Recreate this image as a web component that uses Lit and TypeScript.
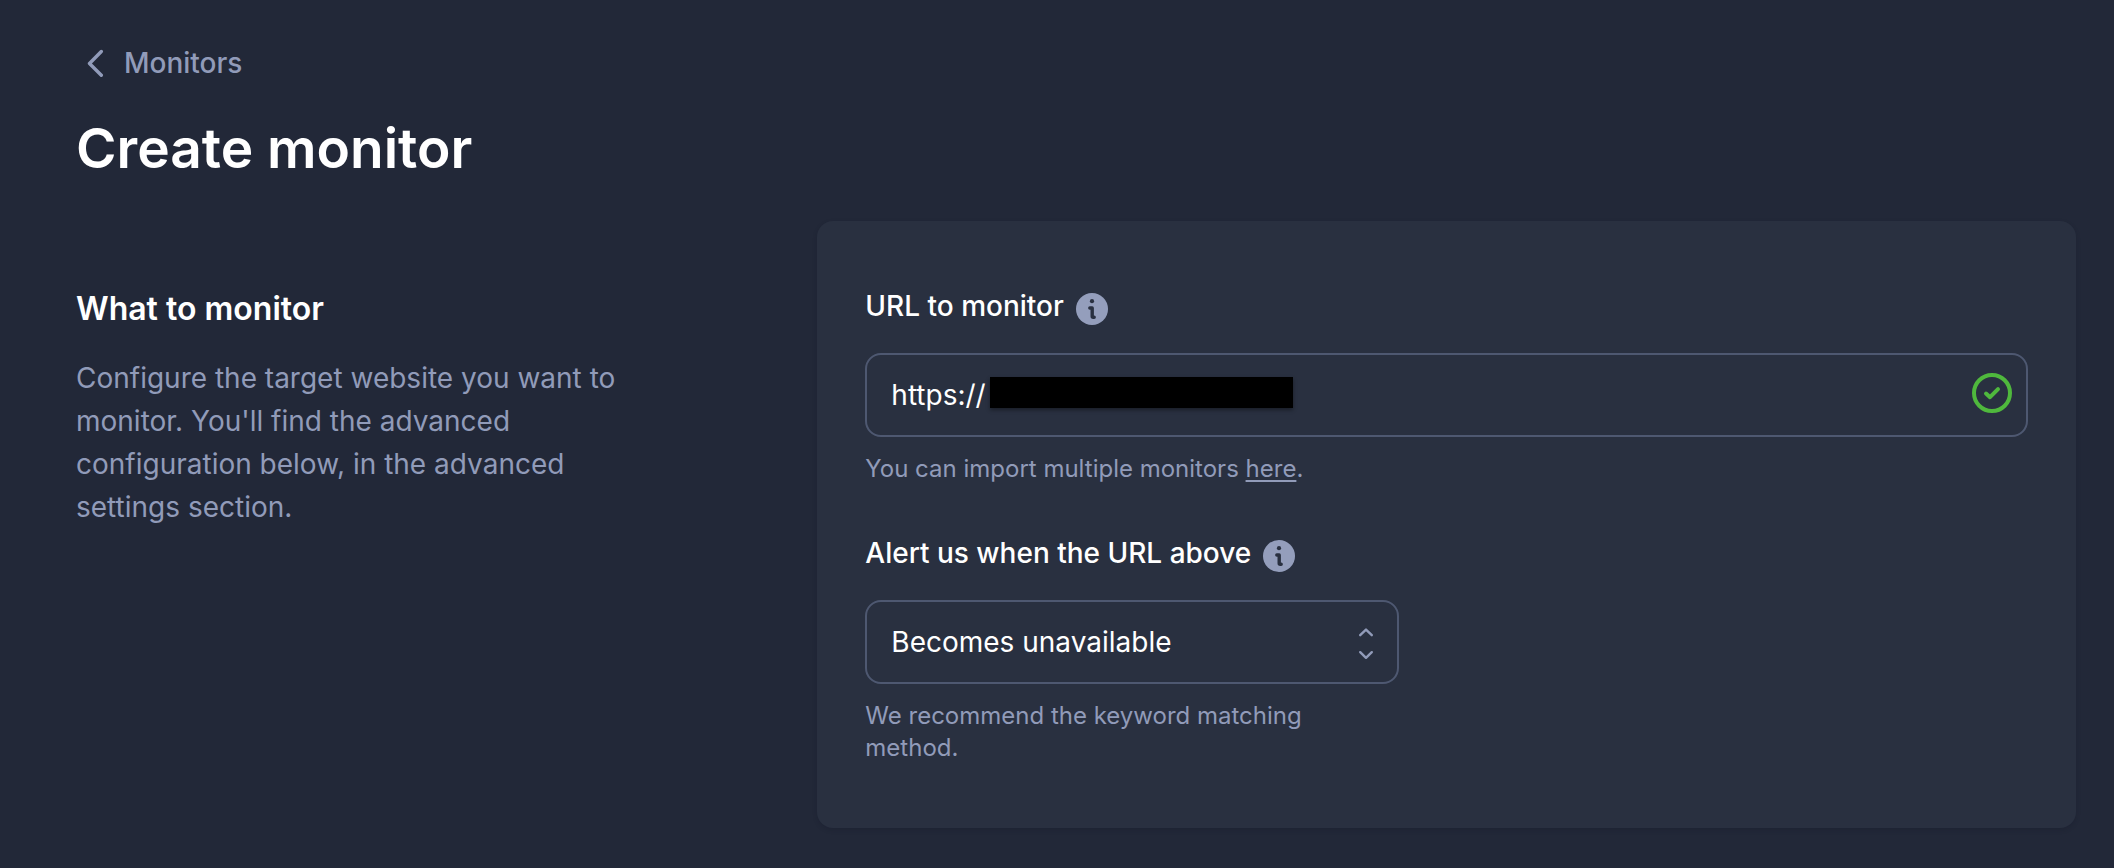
import { LitElement, html, css } from "lit";
import { customElement } from "lit/decorators.js";

const infoIcon = html`
  <svg class="info" viewBox="0 0 32 32" aria-hidden="true">
    <circle cx="16" cy="16" r="16" fill="#949ebc" />
    <circle cx="16" cy="8.2" r="2.1" fill="#293040" />
    <path d="M13.8 15h2.4v8.2q0 1 1 1h1" fill="none" stroke="#293040" stroke-width="3.4" stroke-linecap="round" stroke-linejoin="round" />
  </svg>
`;

@customElement("app-root")
export class AppRoot extends LitElement {
  static styles = css`
    :host {
      display: block;
      box-sizing: border-box;
      min-height: 100vh;
      padding: 43px 38px 40px 76px;
      background: #222838;
      color: #fff;
      font-family: Inter, "Liberation Sans", sans-serif;
      font-size: 28px;
    }
    * {
      box-sizing: border-box;
    }
    h1,
    h2,
    p {
      margin: 0;
    }
    .back {
      display: inline-flex;
      align-items: center;
      gap: 20px;
      padding-left: 10px;
      color: #919bb9;
      font-weight: 500;
      line-height: 40px;
      text-decoration: none;
      vertical-align: top;
    }
    .chevron {
      width: 18px;
      height: 28px;
    }
    .title {
      margin: 33px 0 41px;
      font-size: 55px;
      font-weight: 600;
      line-height: 64px;
    }
    .section {
      display: grid;
      grid-template-columns: 1fr 2fr;
      gap: 112px;
    }
    .intro {
      max-width: 576px;
      padding-top: 68px;
    }
    .heading {
      margin-bottom: 28px;
      font-size: 32px;
      font-weight: 600;
      line-height: 40px;
    }
    .lead {
      color: #919bb9;
      line-height: 43px;
    }
    .card {
      display: grid;
      gap: 47px;
      padding: 64px 48px;
      border-radius: 16px;
      background: #293040;
      box-shadow: 0 2px 4px rgba(20, 24, 38, 0.25);
    }
    .half {
      width: calc(50% - 48px);
    }
    .label-row {
      display: flex;
      align-items: flex-end;
      gap: 12px;
      margin-bottom: 28px;
      font-weight: 500;
      line-height: 38px;
      padding-top: 2px;
    }
    .info {
      width: 32px;
      height: 32px;
      flex: none;
    }
    .control {
      position: relative;
    }
    .box {
      display: block;
      width: 100%;
      height: 84px;
      padding: 0 72px 0 24px;
      border: 2px solid #4e5871;
      border-radius: 16px;
      outline: none;
      appearance: none;
      background: transparent;
      color: #fff;
      font: inherit;
    }
    .redaction {
      position: absolute;
      top: 24px;
      left: 125px;
      width: 303px;
      height: 31px;
      background: #000;
      box-shadow: 0 2px 4px rgba(0, 0, 0, 0.4);
    }
    .valid {
      position: absolute;
      top: 20px;
      right: 16px;
      width: 40px;
      height: 40px;
    }
    .arrows {
      position: absolute;
      top: 26px;
      right: 24px;
      width: 18px;
      height: 36px;
      pointer-events: none;
    }
    .hint {
      margin-top: 16px;
      color: #919bb9;
      font-size: 24px;
      line-height: 32px;
    }
    .hint a {
      color: inherit;
      text-decoration-thickness: 2px;
      text-underline-offset: 3px;
    }
  `;

  render() {
    return html`
      <a class="back" href="#monitors">
        <svg class="chevron" viewBox="0 0 18 28" fill="none" stroke="currentColor" stroke-width="3.4" stroke-linecap="round" stroke-linejoin="round" aria-hidden="true">
          <path d="M15.3 2.5L3.5 14.5L15.3 26.2" />
        </svg>
        Monitors
      </a>
      <h1 class="title">Create monitor</h1>
      <section class="section">
        <div class="intro">
          <h2 class="heading">What to monitor</h2>
          <p class="lead">
            Configure the target website you want to monitor. You'll find the advanced configuration below, in the
            advanced settings section.
          </p>
        </div>
        <form class="card">
          <div>
            <div class="label-row"><label for="url">URL to monitor</label>${infoIcon}</div>
            <div class="control">
              <input class="box" id="url" type="text" value="https://" />
              <span class="redaction"></span>
              <svg class="valid" viewBox="0 0 40 40" fill="none" stroke="#4fb83d" stroke-width="4" stroke-linecap="round" stroke-linejoin="round" aria-hidden="true">
                <circle cx="20" cy="20" r="18" />
                <path d="M14 20.5L18 24.2L26 16.2" />
              </svg>
            </div>
            <p class="hint">You can import multiple monitors <a href="#import">here</a>.</p>
          </div>
          <div class="half">
            <div class="label-row"><label for="condition">Alert us when the URL above</label>${infoIcon}</div>
            <div class="control">
              <select class="box" id="condition">
                <option>Becomes unavailable</option>
              </select>
              <svg class="arrows" viewBox="0 0 18 36" fill="none" stroke="#919bb9" stroke-width="2.4" stroke-linecap="round" stroke-linejoin="round" aria-hidden="true">
                <path d="M3.2 9.2L9 3.6L14.8 9.2M3.2 26.2L9 31.8L14.8 26.2" />
              </svg>
            </div>
            <p class="hint">We recommend the keyword matching method.</p>
          </div>
        </form>
      </section>
    `;
  }
}
